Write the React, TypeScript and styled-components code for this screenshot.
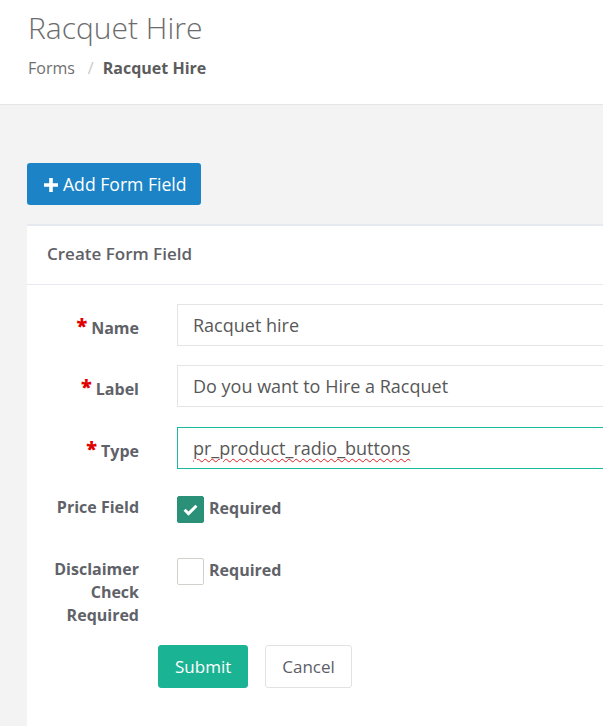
import styled, { createGlobalStyle } from "styled-components"

const GlobalStyle = createGlobalStyle`
  html, body {
    margin: 0;
    padding: 0;
    height: 100%;
    overflow: hidden;
    background: #f3f3f3;
  }
  body {
    font-family: "Open Sans", "Liberation Sans", sans-serif;
  }
  #root {
    min-height: 100%;
    display: flex;
    flex-direction: column;
  }
`

const Page = styled.div`
  flex: 1;
  display: flex;
  flex-direction: column;
  min-height: 726px;
`

const Head = styled.header`
  background: #fff;
  height: 104px;
  border-bottom: 1px solid #e6e6e6;
  padding: 0 28px;
  h1 {
    margin: 10px 0 0;
    font-size: 30px;
    line-height: 36px;
    font-weight: 300;
    color: #6c6c6c;
  }
`

const Crumbs = styled.nav`
  margin-top: 11px;
  display: flex;
  align-items: center;
  font-size: 16px;
  line-height: 22px;
  color: #6f6f6f;
  span.sep {
    color: #c8c8c8;
    padding: 0 9px 0 13px;
  }
  strong {
    color: #5c5c5c;
    font-weight: 700;
  }
`

const Main = styled.main`
  flex: 1;
  display: flex;
  flex-direction: column;
  align-items: flex-start;
  padding: 58px 0 0 27px;
`

const AddButton = styled.button`
  height: 42px;
  width: 174px;
  display: flex;
  align-items: center;
  gap: 5px;
  padding: 0 0 0 17px;
  background: #1c84c6;
  color: #fff;
  border: none;
  border-radius: 3px;
  font-family: inherit;
  font-size: 17.6px;
  svg {
    margin-top: 1px;
  }
`

const Panel = styled.section`
  flex: 1;
  margin-top: 19px;
  width: 640px;
  background: #fff;
  border-top: 2px solid #e6e9ed;
`

const PanelTitle = styled.div`
  height: 59px;
  box-sizing: border-box;
  padding: 0 20px 3px;
  display: flex;
  align-items: center;
  border-bottom: 1px solid #e6e9ed;
  font-size: 17px;
  font-weight: 600;
  color: #5f6166;
`

const Form = styled.form`
  display: flex;
  flex-direction: column;
  padding-top: 19px;
`

const Row = styled.div<{ $check?: boolean; $gap?: number }>`
  display: grid;
  grid-template-columns: 150px 1fr;
  align-items: ${(p) => (p.$check ? "start" : "center")};
  min-height: 42px;
  box-sizing: border-box;
  padding-top: ${(p) => (p.$check ? "7px" : "0")};
  margin-bottom: ${(p) => p.$gap ?? 20}px;
`

const Label = styled.label<{ $req?: boolean }>`
  text-align: right;
  padding-right: 38px;
  padding-top: ${(p) => (p.$req ? "4px" : "0")};
  font-size: 16px;
  line-height: 23px;
  font-weight: 700;
  color: #5f6268;
  b {
    color: #e00000;
    font-size: 20px;
    margin-right: 4px;
    position: relative;
    top: -1px;
  }
`

const Field = styled.div<{ $active?: boolean }>`
  box-sizing: border-box;
  width: 460px;
  height: 42px;
  display: flex;
  align-items: center;
  padding: 0 15px;
  border: 1px solid ${(p) => (p.$active ? "#1abb9c" : "#e4e4e4")};
  font-size: 18px;
  color: #585858;
  white-space: nowrap;
`

const Misspelt = styled.span`
  text-decoration: underline wavy #e02020;
  text-decoration-thickness: 1px;
  text-underline-offset: 3px;
`

const CheckLine = styled.div`
  display: flex;
  align-items: flex-start;
  gap: 5px;
  font-size: 16px;
  font-weight: 700;
  color: #5f6268;
  line-height: 23px;
  span {
    padding-top: 1px;
  }
`

const Box = styled.span<{ $on?: boolean }>`
  box-sizing: border-box;
  width: 27px;
  height: 27px;
  display: flex;
  align-items: center;
  justify-content: center;
  border-radius: 2px;
  background: ${(p) => (p.$on ? "#2a9178" : "#fff")};
  border: 1px solid ${(p) => (p.$on ? "#2a9178" : "#d3d0cc")};
`

const Actions = styled.div`
  display: flex;
  gap: 17px;
  padding-left: 131px;
`

const Btn = styled.button<{ $primary?: boolean }>`
  height: 43px;
  padding: 0 16px;
  border-radius: 3px;
  font-family: inherit;
  font-size: 17px;
  background: ${(p) => (p.$primary ? "#1ab394" : "#fff")};
  color: ${(p) => (p.$primary ? "#fff" : "#5c6066")};
  border: 1px solid ${(p) => (p.$primary ? "#1ab394" : "#e2e2e2")};
`

const Plus = () => (
  <svg width="14" height="14" viewBox="0 0 14 14">
    <path d="M5.2 0h3.6v5.2H14v3.6H8.8V14H5.2V8.8H0V5.2h5.2z" fill="#fff" />
  </svg>
)

const Tick = () => (
  <svg width="15" height="12" viewBox="0 0 15 12">
    <path d="M1.6 5.8l3.9 3.8L13.4 1.8" fill="none" stroke="#fff" strokeWidth="3" />
  </svg>
)

const App = () => {
  return (
    <Page>
      <GlobalStyle />
      <Head>
        <h1>Racquet Hire</h1>
        <Crumbs>
          <span>Forms</span>
          <span className="sep">/</span>
          <strong>Racquet Hire</strong>
        </Crumbs>
      </Head>
      <Main>
        <AddButton>
          <Plus />
          Add Form Field
        </AddButton>
        <Panel>
          <PanelTitle>Create Form Field</PanelTitle>
          <Form>
            <Row $gap={19}>
              <Label $req><b>*</b>Name</Label>
              <Field>Racquet hire</Field>
            </Row>
            <Row>
              <Label $req><b>*</b>Label</Label>
              <Field>Do you want to Hire a Racquet</Field>
            </Row>
            <Row>
              <Label $req><b>*</b>Type</Label>
              <Field $active>
                <Misspelt>pr_product_radio_buttons</Misspelt>
              </Field>
            </Row>
            <Row $check>
              <Label>Price Field</Label>
              <CheckLine>
                <Box $on><Tick /></Box>
                <span>Required</span>
              </CheckLine>
            </Row>
            <Row $check $gap={18}>
              <Label>Disclaimer Check Required</Label>
              <CheckLine>
                <Box />
                <span>Required</span>
              </CheckLine>
            </Row>
            <Actions>
              <Btn $primary type="button">Submit</Btn>
              <Btn type="button">Cancel</Btn>
            </Actions>
          </Form>
        </Panel>
      </Main>
    </Page>
  )
}

export default App
